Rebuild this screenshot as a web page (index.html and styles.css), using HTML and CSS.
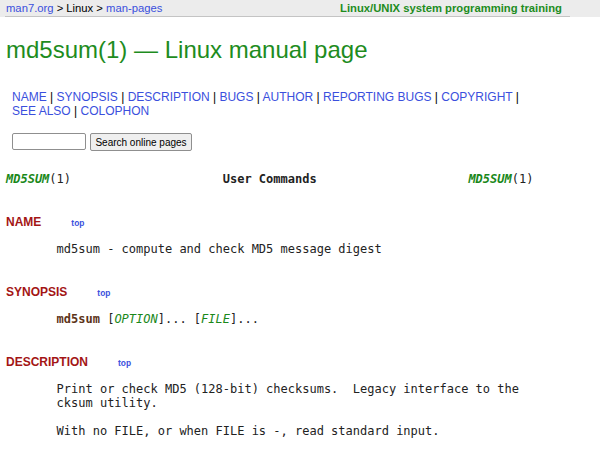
FILE: index.html
```html
<!DOCTYPE html>
<html lang="en">
<head>
    <meta charset="UTF-8">
    <meta name="viewport" content="width=device-width, initial-scale=1.0">
    <title>md5sum(1) - Linux manual page</title>
    <link rel="stylesheet" href="styles.css">
</head>
<body>
    <div class="top-bar">
        <div class="top-bar-inner">
            <span><a href="#">man7.org</a> &gt; Linux &gt; <a href="#">man-pages</a></span>
            <span class="training">Linux/UNIX system programming training</span>
        </div>
    </div>

    <h1>md5sum(1) &mdash; Linux manual page</h1>

    <div class="nav">
        <a href="#NAME">NAME</a> | <a href="#SYNOPSIS">SYNOPSIS</a> | <a href="#DESCRIPTION">DESCRIPTION</a> | <a href="#BUGS">BUGS</a> | <a href="#AUTHOR">AUTHOR</a> | <a href="#REPORTING_BUGS">REPORTING BUGS</a> | <a href="#COPYRIGHT">COPYRIGHT</a> | <a href="#SEE_ALSO">SEE ALSO</a> | <a href="#COLOPHON">COLOPHON</a>
    </div>

    <form class="search" onsubmit="return false;">
        <input type="text" class="search-box">
        <button type="submit">Search online pages</button>
    </form>

<pre class="headline"><b><i>MD5SUM</i></b>(1)                     <b>User Commands</b>                     <b><i>MD5SUM</i></b>(1)</pre>

    <h2 id="NAME">NAME<a class="top" href="#">top</a></h2>
<pre>       md5sum - compute and check MD5 message digest</pre>

    <h2 id="SYNOPSIS">SYNOPSIS<a class="top" href="#">top</a></h2>
<pre>       <b>md5sum</b> [<i>OPTION</i>]... [<i>FILE</i>]...</pre>

    <h2 id="DESCRIPTION">DESCRIPTION<a class="top" href="#">top</a></h2>
<pre>       Print or check MD5 (128-bit) checksums.  Legacy interface to the
       cksum utility.

       With no FILE, or when FILE is -, read standard input.</pre>
</body>
</html>
```

FILE: styles.css
```css
body {
    margin: 0;
    padding: 0 6px;
    font-family: "Liberation Sans", Arial, sans-serif;
    font-size: 12px;
    color: #000;
    background-color: #fff;
}
a {
    color: #3a4fdd;
    text-decoration: none;
}
.top-bar {
    margin: 0 -6px;
    height: 17px;
    background-color: #ececec;
    font-size: 11.25px;
}
.top-bar-inner {
    display: flex;
    justify-content: space-between;
    margin: 0 30px 0 5px;
    padding: 1px 8px 0 1px;
    height: 15px;
    line-height: 15px;
    border-bottom: 1px solid #c4c4c4;
}
.training {
    color: #1e8c1e;
    font-weight: bold;
}
h1 {
    margin: 19px 0 0;
    font-size: 24px;
    line-height: 28px;
    font-weight: normal;
    color: #1e8c1e;
}
.nav {
    margin: 26px 0 0 6px;
    max-width: 525px;
    line-height: 14px;
}
.search {
    display: flex;
    gap: 4px;
    margin: 15px 0 0 6px;
    height: 17px;
}
.search-box {
    box-sizing: border-box;
    width: 74px;
    height: 17px;
    padding: 0 2px;
    border: 1px solid #8f8f8f;
    border-radius: 2px;
}
.search button {
    box-sizing: border-box;
    width: 102px;
    height: 18px;
    padding: 0;
    font-family: "Liberation Sans", Arial, sans-serif;
    font-size: 10px;
    color: #000;
    background-color: #efefef;
    border: 1px solid #8f8f8f;
    border-radius: 2px;
}
pre {
    margin: 0;
    font-family: "DejaVu Sans Mono", monospace;
    font-size: 12px;
    line-height: 14px;
    color: #222;
}
pre i {
    color: #1a881a;
}
pre b {
    color: #5c3317;
}
.headline {
    margin-top: 22px;
}
.headline b {
    color: #222;
}
.headline b i {
    color: #1a881a;
}
h2 {
    margin: 29px 0 12px;
    font-size: 12px;
    line-height: 14px;
    color: #a31515;
}
.top {
    margin-left: 30px;
    font-size: 8.4px;
    font-weight: bold;
}
```
